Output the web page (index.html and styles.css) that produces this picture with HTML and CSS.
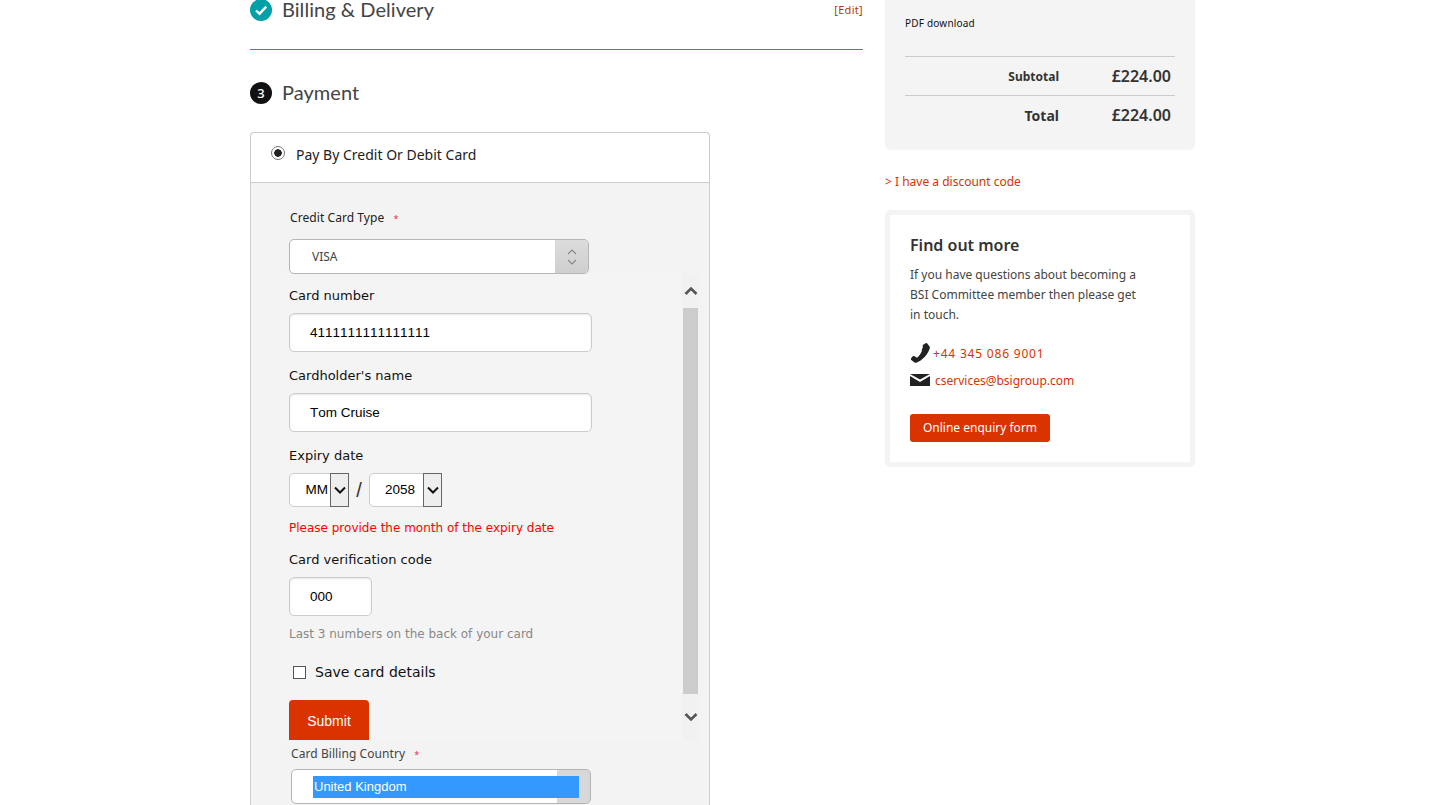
FILE: index.html
```html
<!DOCTYPE html>
<html lang="en">
<head>
    <meta charset="UTF-8">
    <title>Checkout - Payment</title>
    <link rel="stylesheet" href="styles.css">
</head>
<body>
    <div class="page">
        <main class="steps">
            <div class="step-head step-done">
                <span class="step-icon done">
                    <svg viewBox="0 0 22 22" width="22" height="22"><circle cx="11" cy="11" r="11" fill="#00a0a8"/><path d="M6 11.500l3.600 3.400L16.200 7.600" fill="none" stroke="#fff" stroke-width="2.400"/></svg>
                </span>
                <h2>Billing &amp; Delivery</h2>
                <a class="edit" href="#">[Edit]</a>
            </div>
            <div class="step-head step-current">
                <span class="step-icon num">3</span>
                <h2>Payment</h2>
            </div>

            <section class="pay-card">
                <div class="pay-head">
                    <span class="radio"></span>
                    <span>Pay By Credit Or Debit Card</span>
                </div>
                <div class="pay-body">
                    <div class="outer-label">Credit Card Type <span class="req">*</span></div>
                    <div class="fancy-select">
                        <span class="fancy-value">VISA</span>
                        <span class="fancy-arrow">
                            <svg viewBox="0 0 10 18" width="10" height="18"><path d="M1 6l4-4 4 4M1 12l4 4 4-4" fill="none" stroke="#888" stroke-width="1.200"/></svg>
                        </span>
                    </div>

                    <div class="frame">
                        <form class="frame-form">
                            <label class="lbl">Card number</label>
                            <div class="input wide">4111111111111111</div>
                            <label class="lbl">Cardholder's name</label>
                            <div class="input wide">Tom Cruise</div>
                            <label class="lbl">Expiry date</label>
                            <div class="expiry">
                                <div class="mini month"><span>MM</span><i class="drop"><svg viewBox="0 0 12 8" width="12" height="8"><path d="M1 1.500l5 5 5-5" fill="none" stroke="#111" stroke-width="2"/></svg></i></div>
                                <span class="slash">/</span>
                                <div class="mini year"><span>2058</span><i class="drop"><svg viewBox="0 0 12 8" width="12" height="8"><path d="M1 1.500l5 5 5-5" fill="none" stroke="#111" stroke-width="2"/></svg></i></div>
                            </div>
                            <p class="error">Please provide the month of the expiry date</p>
                            <label class="lbl">Card verification code</label>
                            <div class="input cvv">000</div>
                            <p class="hint">Last 3 numbers on the back of your card</p>
                            <div class="save"><span class="check"></span>Save card details</div>
                            <div class="submit">Submit</div>
                        </form>
                        <div class="scrollbar">
                            <span class="sb-btn"><svg viewBox="0 0 14 10" width="14" height="10"><path d="M1.500 8L7 2.500L12.500 8" fill="none" stroke="#555" stroke-width="2.600"/></svg></span>
                            <span class="sb-thumb"></span>
                            <span class="sb-btn sb-down"><svg viewBox="0 0 14 10" width="14" height="10"><path d="M1.500 2L7 7.500L12.500 2" fill="none" stroke="#555" stroke-width="2.600"/></svg></span>
                        </div>
                    </div>

                    <div class="outer-label country-label">Card Billing Country <span class="req">*</span></div>
                    <div class="fancy-select country">
                        <span class="selected">United Kingdom</span>
                    </div>
                </div>
            </section>
        </main>

        <aside class="side">
            <div class="summary">
                <p class="pdf">PDF download</p>
                <div class="sum-row sub"><span>Subtotal</span><b>£224.00</b></div>
                <div class="sum-row tot"><span>Total</span><b>£224.00</b></div>
            </div>
            <a class="discount" href="#">&gt; I have a discount code</a>
            <div class="more">
                <h3>Find out more</h3>
                <p>If you have questions about becoming a<br>BSI Committee member then please get<br>in touch.</p>
                <div class="contact phone">
                    <svg viewBox="0 0 20 20" width="20" height="20"><path d="M13.200 1.800L15.600.3c.6-.4 1.300-.3 1.700.3l2.200 3c.4.500.5 1.100.3 1.700-1.800 6-7.400 12.400-13.600 14.400-.6.200-1.200.1-1.700-.3L1.300 17c-.5-.5-.6-1.100-.2-1.700l1.500-1.900c.4-.5 1-.6 1.600-.3l2.300 1.300c.4.200.8.200 1.100-.1 1.700-1.500 3.400-3.900 4.200-6 .2-.4.100-.8-.2-1.100L12.900 4c-.5-.7-.3-1.700.3-2.200z" fill="#222"/></svg>
                    <a href="#">+44 345 086 9001</a>
                </div>
                <div class="contact mail">
                    <svg viewBox="0 0 20 12" width="20" height="12"><path d="M0 0h20L10 5.500z" fill="#222"/><path d="M0 2l10 6 10-6v10H0z" fill="#222"/></svg>
                    <a href="#">cservices@bsigroup.com</a>
                </div>
                <a class="enquiry" href="#">Online enquiry form</a>
            </div>
        </aside>
    </div>
</body>
</html>
```
FILE: styles.css
```css
html, body { height: 805px; overflow: hidden; }
body { margin: 0; background: #fff; color: #333; font-family: "Noto Sans", Arial, sans-serif; font-size: 12px; }
a { text-decoration: none; color: #d93300; }

/* the page is scrolled down a bit in the shot, so the top is cut off */
.page { display: flex; gap: 22px; width: 945px; margin: -10px 0 0 250px; }
.steps { width: 613px; flex: none; }
.side { width: 310px; flex: none; }

.step-head { display: flex; align-items: center; }
.step-head h2 { margin: 0; padding-bottom: 2px; font-family: Lato, "Noto Sans", sans-serif; font-size: 20px; font-weight: 400; line-height: 18px; color: #444; letter-spacing: .05px; }
.step-icon { width: 22px; height: 22px; margin-right: 10px; flex: none; }
.step-icon svg { display: block; }
.step-done { height: 22px; padding: 9px 0 28px; border-bottom: 1px solid #1f97a6; }
.step-current { height: 22px; margin-top: 32px; }
.num { border-radius: 50%; background: #111; color: #fff; font-size: 13px; font-weight: 500; line-height: 22px; text-align: center; }
.edit { margin-left: auto; font-size: 11px; letter-spacing: .3px; align-self: flex-start; margin-top: 3px; color: #b8350f; }

.pay-card { width: 458px; margin-top: 28px; border: 1px solid #ccc; border-bottom: none; border-radius: 4px 4px 0 0; }
.pay-head { display: flex; align-items: center; height: 43px; padding-bottom: 6px; border-bottom: 1px solid #ccc; font-size: 14px; color: #222; }
.radio { width: 12px; height: 12px; margin: -3px 11px 0 20px; border: 1px solid #777; border-radius: 50%; background: radial-gradient(circle, #222 0 3.500px, #fff 4px); flex: none; }
.pay-body { background: #f3f3f3; height: 595px; padding-top: 27px; }

.outer-label { margin-left: 39px; font-size: 12px; line-height: 16px; color: #222; letter-spacing: .07px; }
.req { margin-left: 6px; color: #e0304a; font-size: 9px; }

.fancy-select { display: flex; align-items: center; width: 298px; height: 33px; margin: 12px 0 0 38px; border: 1px solid #b5b5b5; border-radius: 5px; background: #fff; overflow: hidden; }
.fancy-value { flex: 1; padding-left: 22px; font-size: 12px; color: #444; }
.fancy-arrow { display: flex; align-items: center; justify-content: center; width: 33px; height: 100%; background: linear-gradient(#dcdcdc, #cfcfcf); }

.frame { display: flex; height: 466px; margin-left: 31px; background: #f4f4f4; overflow: hidden; width: 417px; }
.frame-form { width: 393px; flex: none; padding: 14px 0 0 7px; font-family: "DejaVu Sans", Verdana, sans-serif; font-size: 13px; color: #111; }
.lbl { display: block; line-height: 16px; font-size: 13px; }
.input { width: 281px; height: 37px; margin: 9px 0 16px; padding-left: 20px; border: 1px solid #ccc; border-radius: 5px; background: #fff; box-shadow: inset 0 1px 2px rgba(0, 0, 0, .1); font: 13.500px/37px "Liberation Sans", Arial, sans-serif; font-kerning: none; color: #000; }
.cvv { width: 61px; margin-bottom: 10px; }

.expiry { display: flex; align-items: center; margin-top: 9px; }
.mini { display: flex; justify-content: flex-end; height: 32px; border: 1px solid #ccc; border-radius: 5px; background: #fff; font: 13.500px/32px "Liberation Sans", Arial, sans-serif; color: #000; }
.month { width: 58px; }
.month span { margin-right: 1px; }
.year { width: 71px; }
.year span { margin-right: 7px; }
.drop { display: flex; align-items: center; justify-content: center; width: 17px; margin: -1px -1px -1px 1px; border: 1px solid #666; background: #eee; }
.slash { width: 20px; font-size: 20px; text-align: center; color: #333; font-family: "Liberation Sans", sans-serif; }

.error { margin: 13px 0 0; height: 32px; font-size: 12px; line-height: 16px; color: #f00; }
.hint { margin: 0; font-size: 12px; line-height: 16px; color: #888; }
.save { display: flex; align-items: center; margin: 21px 0 0 4px; font-size: 14px; line-height: 18px; color: #111; }
.check { width: 11px; height: 11px; margin-right: 9px; border: 1px solid #555; background: #fff; }
.submit { width: 80px; height: 60px; margin-top: 19px; border-radius: 4px; background: #d93300; color: #fff; font: 14px/42px "Liberation Sans", Arial, sans-serif; text-align: center; }

.scrollbar { display: flex; flex-direction: column; align-items: center; width: 17px; background: #f1f1f1; }
.sb-btn { display: flex; align-items: center; justify-content: center; height: 34px; flex: none; }
.sb-down { height: 46px; }
.sb-thumb { flex: 1; width: 15px; background: #ccc; }

.country-label { margin: 6px 0 0 40px; line-height: 16px; color: #444; }
.country { position: relative; width: 298px; margin: 6px 0 0 40px; background: linear-gradient(90deg, #fff 265px, #d8d8d8 265px); }
.selected { position: absolute; left: 21px; top: 6px; width: 266px; height: 22px; padding-left: 1px; box-sizing: border-box; background: #39f; color: #fff; font: 13px/22px "Liberation Sans", Arial, sans-serif; }

.summary { height: 160px; padding: 0 20px; box-sizing: border-box; background: #f4f4f4; border-radius: 0 0 6px 6px; }
.pdf { margin: 0; padding-top: 26px; height: 40px; font-size: 10px; letter-spacing: .2px; line-height: 14px; color: #111; }
.sum-row { display: flex; justify-content: flex-end; align-items: center; height: 38px; border-top: 1px solid #ccc; color: #333; }
.sum-row span { font-weight: 700; }
.sum-row b { width: 116px; padding-right: 4px; text-align: right; font-size: 16px; font-weight: 600; box-sizing: border-box; }
.sub span { font-size: 12px; }
.tot span { font-size: 14px; }

.discount { display: block; margin-top: 24px; font-size: 12px; line-height: 16px; }

.more { margin-top: 20px; padding: 20px; border: 5px solid #f4f4f4; border-radius: 5px; height: 207px; }
.more h3 { margin: 0; font-size: 16px; line-height: 20px; font-weight: 600; color: #333; }
.more p { margin: 10px 0 0; font-size: 12px; line-height: 20px; color: #444; }
.contact { display: flex; align-items: center; font-size: 12px; }
.phone { gap: 3px; margin-top: 18px; height: 20px; }
.phone a { letter-spacing: .8px; }
.mail { gap: 5px; margin-top: 7px; height: 20px; }
.enquiry { display: block; width: 140px; height: 28px; margin-top: 24px; background: #d93300; border-radius: 3px; color: #fff; font-size: 12px; line-height: 27px; text-align: center; }
```
